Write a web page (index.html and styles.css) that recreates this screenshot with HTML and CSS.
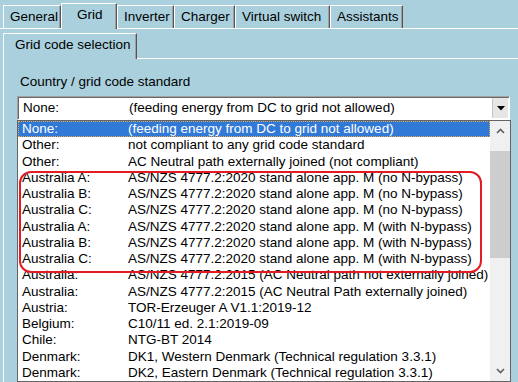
FILE: index.html
```html
<!DOCTYPE html>
<html lang="en">
<head>
<meta charset="UTF-8">
<title>Grid code selection</title>
<link rel="stylesheet" href="styles.css">
</head>
<body>

<!-- Top tabs -->
<div class="tabs">
<div class="tab">General</div>
<div class="tab active">Grid</div>
<div class="tab">Inverter</div>
<div class="tab">Charger</div>
<div class="tab">Virtual switch</div>
<div class="tab">Assistants</div>
</div>

<div class="panel">
<div class="subtabs">
<div class="tab active">Grid code selection</div>
</div>

<div class="subpanel">
<div class="label">Country / grid code standard</div>

<div class="combo">
<div class="combo-text"><span>None:</span><span>(feeding energy from DC to grid not allowed)</span></div>
<div class="drop-btn">
<svg width="8" height="5" viewBox="0 0 8 5"><path d="M0 0h8L4 4.5z" fill="#000"/></svg>
</div>
</div>

<div class="list">
<div class="rows">
<div class="row selected"><span>None:</span><span>(feeding energy from DC to grid not allowed)</span></div>
<div class="row"><span>Other:</span><span>not compliant to any grid code standard</span></div>
<div class="row"><span>Other:</span><span>AC Neutral path externally joined (not compliant)</span></div>
<div class="row"><span>Australia A:</span><span>AS/NZS 4777.2:2020 stand alone app. M (no N-bypass)</span></div>
<div class="row"><span>Australia B:</span><span>AS/NZS 4777.2:2020 stand alone app. M (no N-bypass)</span></div>
<div class="row"><span>Australia C:</span><span>AS/NZS 4777.2:2020 stand alone app. M (no N-bypass)</span></div>
<div class="row"><span>Australia A:</span><span>AS/NZS 4777.2:2020 stand alone app. M (with N-bypass)</span></div>
<div class="row"><span>Australia B:</span><span>AS/NZS 4777.2:2020 stand alone app. M (with N-bypass)</span></div>
<div class="row"><span>Australia C:</span><span>AS/NZS 4777.2:2020 stand alone app. M (with N-bypass)</span></div>
<div class="row"><span>Australia:</span><span>AS/NZS 4777.2:2015 (AC Neutral path not externally joined)</span></div>
<div class="row"><span>Australia:</span><span>AS/NZS 4777.2:2015 (AC Neutral Path externally joined)</span></div>
<div class="row"><span>Austria:</span><span>TOR-Erzeuger A V1.1:2019-12</span></div>
<div class="row"><span>Belgium:</span><span>C10/11 ed. 2.1:2019-09</span></div>
<div class="row"><span>Chile:</span><span>NTG-BT 2014</span></div>
<div class="row"><span>Denmark:</span><span>DK1, Western Denmark (Technical regulation 3.3.1)</span></div>
<div class="row"><span>Denmark:</span><span>DK2, Eastern Denmark (Technical regulation 3.3.1)</span></div>
</div>

<div class="scrollbar">
<div class="sb-btn"><svg width="9" height="6" viewBox="0 0 9 6"><path d="M1 5L4.5 1.5L8 5" fill="none" stroke="#606060" stroke-width="1.6"/></svg></div>
<div class="sb-track"><div class="sb-thumb"></div></div>
<div class="sb-btn"><svg width="9" height="6" viewBox="0 0 9 6"><path d="M1 1L4.5 4.5L8 1" fill="none" stroke="#606060" stroke-width="1.6"/></svg></div>
</div>

<!-- highlight marker -->
<div class="marker"></div>
</div>
</div>
</div>

</body>
</html>
```

FILE: styles.css
```css
*{box-sizing:border-box;}
body{
margin:0;width:518px;height:382px;overflow:hidden;
background:#aad0de;color:#000;
font:13.5px "Liberation Sans",Arial,sans-serif;
}

/* Tabs */
.tabs{display:flex;align-items:flex-end;height:28px;padding-left:3px;}
.tab{
height:23px;padding:0 6px;line-height:21px;white-space:nowrap;
background:#aad0de;
border-top:1px solid #fff;border-left:1px solid #fff;border-right:1px solid #555;
box-shadow:inset -1px 0 #a0a0a0;
}
.tab.active{
position:relative;height:26px;margin-bottom:-1px;padding:0 15px;
}
.tabs .tab:nth-child(1){width:58px;}
.tabs .tab:nth-child(2){width:56px;}
.tabs .tab:nth-child(3){width:57px;}
.tabs .tab:nth-child(4){width:61px;}
.tabs .tab:nth-child(5){width:95px;}
.tabs .tab:nth-child(6){width:73px;}

.panel{border-top:1px solid #fff;padding:4px 0 0 3px;}
.subtabs{display:flex;align-items:flex-end;height:26px;border-bottom:1px solid #fff;}
.subtabs .tab{height:26px;padding:0 11px;width:134px;}

.subpanel{border-left:1px solid #fff;padding-left:13px;height:340px;}
.label{padding:15px 0 0 3px;line-height:16px;}

/* Combo box */
.combo{
display:flex;margin-top:6px;width:493px;height:24px;background:#fff;
border:1px solid;border-color:#a0a0a0 #fff #fff #a0a0a0;
box-shadow:inset 1px 1px #696969;
}
.combo-text{flex:1;display:grid;grid-template-columns:106px 1fr;padding-left:5px;line-height:22px;}
.drop-btn{
width:16px;margin:1px 1px 1px 0;background:#e6e6e6;border-left:1px solid #c8c8c8;
display:flex;align-items:center;justify-content:center;
}

/* Dropdown list */
.list{
position:relative;display:flex;width:494px;height:262px;
background:#fff;border:1px solid #646464;
}
.rows{flex:1;}
.row{display:grid;grid-template-columns:106px 1fr;height:16.25px;line-height:16px;padding-left:4px;white-space:nowrap;}
.row.selected{background:#3179d7;color:#fff;outline:1px dotted #e8a848;outline-offset:-1px;}

.scrollbar{width:20px;display:flex;flex-direction:column;background:#f0f0f0;}
.sb-btn{height:20px;display:flex;align-items:center;justify-content:center;}
.sb-track{flex:1;padding-top:10px;}
.sb-thumb{height:107px;background:#cdcdcd;}

.marker{
position:absolute;left:1px;top:50px;width:463px;height:102px;
border:2px solid #e31b23;border-radius:12px;
}
```
